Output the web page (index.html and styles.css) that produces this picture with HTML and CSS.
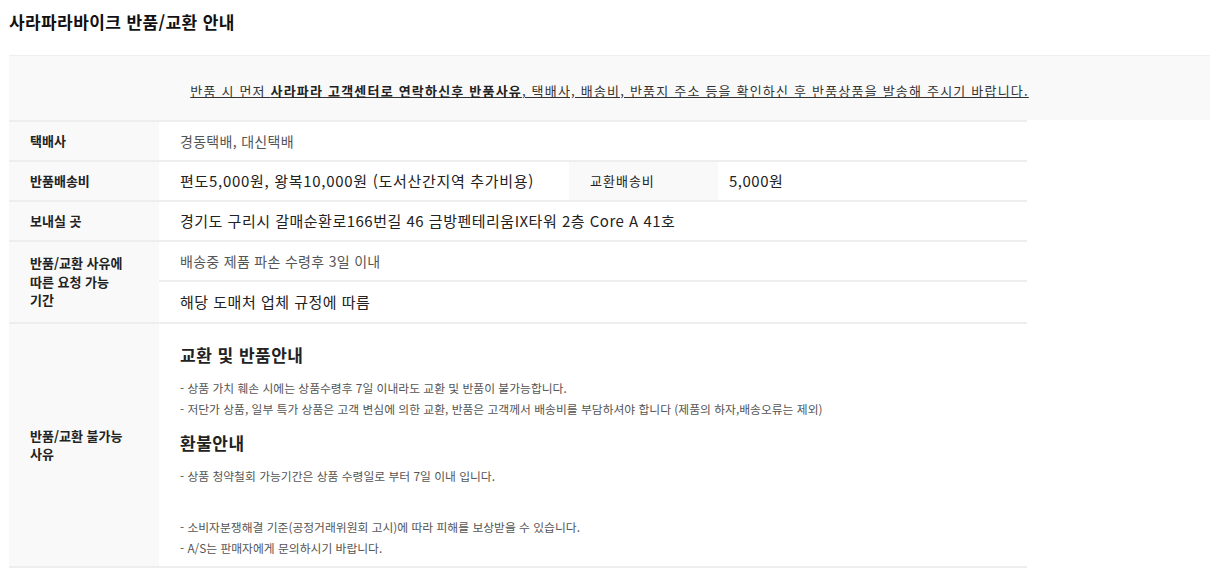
FILE: index.html
```html
<!DOCTYPE html>
<html lang="ko">
<head>
<meta charset="utf-8">
<title>사라파라바이크 반품/교환 안내</title>
<link rel="stylesheet" href="styles.css">
</head>
<body>
<div class="page">
  <h2 class="title">사라파라바이크 반품/교환 안내</h2>
  <div class="notice">
    <p class="notice-text">반품 시 먼저 <strong>사라파라 고객센터로 연락하신후 반품사유</strong>, 택배사, 배송비, 반품지 주소 등을 확인하신 후 반품상품을 발송해 주시기 바랍니다.</p>
  </div>
  <table class="info">
    <colgroup>
      <col class="c-label">
      <col class="c-val">
      <col class="c-label2">
      <col class="c-val2">
    </colgroup>
    <tbody>
      <tr class="r">
        <th>택배사</th>
        <td colspan="3" class="soft">경동택배, 대신택배</td>
      </tr>
      <tr class="r">
        <th>반품배송비</th>
        <td class="big wide">편도5,000원, 왕복10,000원 (도서산간지역 추가비용)</td>
        <th class="th2">교환배송비</th>
        <td class="big td2">5,000원</td>
      </tr>
      <tr class="r">
        <th>보내실 곳</th>
        <td colspan="3" class="big">경기도 구리시 갈매순환로166번길 46 금방펜테리움IX타워 2층 Core A 41호</td>
      </tr>
      <tr class="r r-sub1">
        <th rowspan="2">반품/교환 사유에<br>따른 요청 가능<br>기간</th>
        <td colspan="3" class="soft">배송중 제품 파손 수령후 3일 이내</td>
      </tr>
      <tr class="r r-sub2">
        <td colspan="3" class="big">해당 도매처 업체 규정에 따름</td>
      </tr>
      <tr class="r r-last">
        <th>반품/교환 불가능<br>사유</th>
        <td colspan="3" class="guide">
          <h3 class="g-title">교환 및 반품안내</h3>
          <ul class="g-list">
            <li>- 상품 가치 훼손 시에는 상품수령후 7일 이내라도 교환 및 반품이 불가능합니다.</li>
            <li>- 저단가 상품, 일부 특가 상품은 고객 변심에 의한 교환, 반품은 고객께서 배송비를 부담하셔야 합니다 (제품의 하자,배송오류는 제외)</li>
          </ul>
          <h3 class="g-title">환불안내</h3>
          <ul class="g-list">
            <li>- 상품 청약철회 가능기간은 상품 수령일로 부터 7일 이내 입니다.</li>
          </ul>
          <ul class="g-list g-gap">
            <li>- 소비자분쟁해결 기준(공정거래위원회 고시)에 따라 피해를 보상받을 수 있습니다.</li>
            <li>- A/S는 판매자에게 문의하시기 바랍니다.</li>
          </ul>
        </td>
      </tr>
    </tbody>
  </table>
</div>
</body>
</html>
```
FILE: styles.css
```css
* { box-sizing: border-box; }
body {
  margin: 0;
  background: #fff;
  color: #222;
  font-family: "Noto Sans CJK KR", "Noto Sans", sans-serif;
}
.page {
  padding: 11px 10px 0 9px;
}
.title {
  margin: 0;
  font-size: 17px;
  line-height: 22px;
  font-weight: 700;
  color: #111;
  letter-spacing: 0.4px;
}
.notice {
  margin-top: 22px;
  border-top: 1px solid #eeeeee;
  background: #f9f9f9;
  height: 65px;
  display: flex;
  align-items: center;
  justify-content: center;
  padding-top: 6px;
}
.notice-text {
  margin: 0;
  font-size: 13px;
  line-height: 18px;
  color: #333;
  text-decoration: underline;
  letter-spacing: 1.2px;
}
.notice-text strong { font-weight: 700; color: #222; }

.info {
  width: 1018px;
  table-layout: fixed;
  border-collapse: separate;
  border-spacing: 0;
  border-top: 2px solid #eeeeee;
}
.c-label { width: 150px; }
.c-val { width: 410px; }
.c-label2 { width: 149px; }
.c-val2 { width: 309px; }

.info th,
.info td {
  border-bottom: 2px solid #eeeeee;
  padding: 0 10px 0 21px;
  vertical-align: middle;
  text-align: left;
}
.info th {
  background: #f9f9f9;
  font-size: 13px;
  line-height: 18.5px;
  font-weight: 700;
  color: #222;
}
.r { height: 40px; }
.r-sub1 { height: 40px; }
.r-sub2 { height: 42px; }
.info .th2 { padding-left: 21px; font-weight: 400; color: #222; letter-spacing: 1px; }
.info .td2 { padding-left: 11px; }
.soft {
  font-size: 14px;
  line-height: 18px;
  color: #555;
  letter-spacing: 0.3px;
}
.big {
  font-size: 15px;
  line-height: 20px;
  color: #222;
  letter-spacing: 0.5px;
}
.big.wide { letter-spacing: 0.7px; }
.info .guide {
  padding: 19px 10px 8px 21px;
  color: #555;
}
.g-title {
  margin: 0 0 10px;
  font-size: 17px;
  line-height: 24px;
  font-weight: 700;
  color: #222;
  letter-spacing: 0.5px;
}
.g-list {
  list-style: none;
  margin: 0 0 12px;
  padding: 0;
  font-size: 11.8px;
  line-height: 21px;
  color: #555;
}
.g-list.g-gap { margin-top: 30px; margin-bottom: 0; }
```
